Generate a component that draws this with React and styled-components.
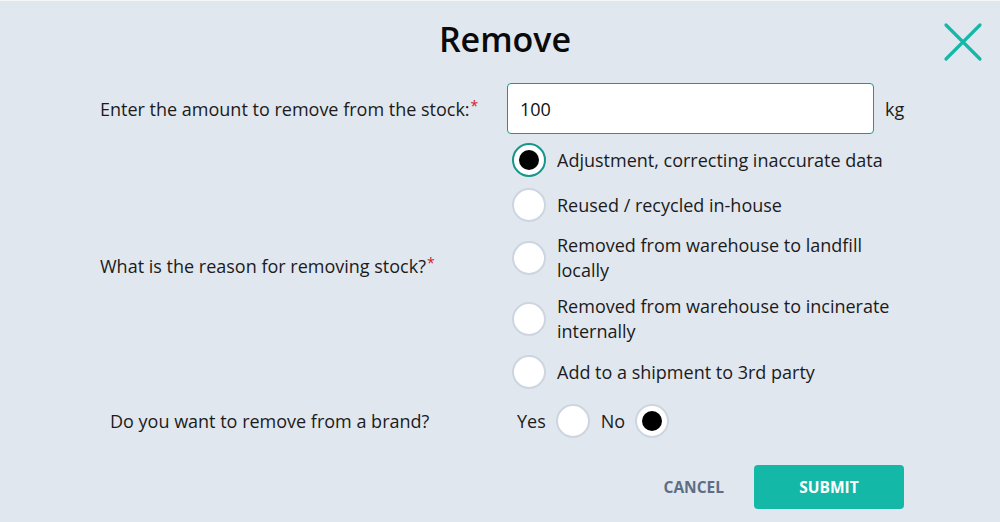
import React from 'react';
import styled, { createGlobalStyle } from 'styled-components';

const GlobalStyle = createGlobalStyle`
  html, body {
    margin: 0;
    padding: 0;
    background: #e1e7ef;
    font-family: "Open Sans", "Noto Sans", sans-serif;
    color: #1b1b1b;
  }
`;

const Modal = styled.div`
  position: relative;
  width: 1000px;
  height: 522px;
  box-sizing: border-box;
  background: #e1e7ef;
  border-top: 1px solid #f4f6f9;
  padding: 16px 96px 0 100px;
`;

const Title = styled.h1`
  margin: 0;
  text-align: center;
  font-family: "Open Sans", sans-serif;
  font-weight: 600;
  font-size: 34px;
  line-height: 44px;
  color: #0a0a0a;
  padding-left: 6px;
`;

const CloseButton = styled.button`
  position: absolute;
  top: 21px;
  right: 17px;
  width: 40px;
  height: 40px;
  padding: 0;
  border: none;
  background: none;
  cursor: pointer;
`;

const Form = styled.div`
  display: grid;
  grid-template-columns: 407px 1fr;
  align-items: center;
  row-gap: 9px;
  margin-top: 22px;
`;

const Label = styled.div`
  font-size: 18px;
  line-height: 24px;
  padding-left: ${(p) => p.indent || 0}px;
  margin-top: ${(p) => p.offset || 0}px;
`;

const Required = styled.span`
  color: #d0202a;
  font-size: 14px;
  vertical-align: top;
  line-height: 18px;
  margin-left: 1px;
`;

const InputRow = styled.div`
  display: flex;
  align-items: center;
  gap: 11px;
`;

const Input = styled.input`
  width: 367px;
  height: 51px;
  box-sizing: border-box;
  border: 1px solid #1a9a8a;
  border-radius: 4px;
  padding: 0 12px;
  font-family: "Open Sans", sans-serif;
  font-size: 18px;
  color: #111;
  background: #fff;
  outline: none;
`;

const Unit = styled.span`
  font-size: 18px;
`;

const RadioList = styled.div`
  display: flex;
  flex-direction: column;
  gap: 11px;
  padding-left: 5px;
`;

const Option = styled.label`
  display: flex;
  align-items: center;
  gap: 11px;
  min-height: 34px;
  font-size: 18px;
  line-height: 25px;
  max-width: 390px;
  cursor: pointer;
`;

const Circle = styled.span`
  flex: none;
  width: 34px;
  height: 34px;
  box-sizing: border-box;
  border-radius: 50%;
  border: 2px solid ${(p) => (p.focused ? '#16968a' : '#cdd5e0')};
  background: #fff;
  display: flex;
  align-items: center;
  justify-content: center;
  &::after {
    content: '';
    width: 20px;
    height: 20px;
    border-radius: 50%;
    background: #000;
    display: ${(p) => (p.checked ? 'block' : 'none')};
  }
`;

const Inline = styled.div`
  display: flex;
  align-items: center;
  gap: 10px;
  padding-left: 10px;
  margin-top: 6px;
  font-size: 18px;
`;

const InlineOption = styled.label`
  display: flex;
  align-items: center;
  gap: 10px;
  margin-right: 1px;
`;

const Footer = styled.div`
  display: flex;
  justify-content: flex-end;
  align-items: center;
  gap: 30px;
  margin-top: 27px;
`;

const CancelButton = styled.button`
  border: none;
  background: none;
  padding: 0;
  font-family: "Open Sans", sans-serif;
  font-weight: 700;
  font-size: 15.5px;
  color: #5f6d84;
  cursor: pointer;
`;

const SubmitButton = styled.button`
  width: 150px;
  height: 44px;
  border: none;
  border-radius: 4px;
  background: #14b8a6;
  color: #fff;
  font-family: "Open Sans", sans-serif;
  font-weight: 700;
  font-size: 15.5px;
  cursor: pointer;
`;

const reasons = [
  'Adjustment, correcting inaccurate data',
  'Reused / recycled in-house',
  'Removed from warehouse to landfill locally',
  'Removed from warehouse to incinerate internally',
  'Add to a shipment to 3rd party',
];

const App = () => {
  return (
    <Modal>
      <GlobalStyle />
      <Title>Remove</Title>
      <CloseButton aria-label="Close">
        <svg width="40" height="40" viewBox="0 0 40 40">
          <path d="M3 3 L37 37 M37 3 L3 37" stroke="#14b8a6" strokeWidth="3.2" strokeLinecap="round" />
        </svg>
      </CloseButton>
      <Form>
        <Label>
          Enter the amount to remove from the stock:<Required>*</Required>
        </Label>
        <InputRow>
          <Input defaultValue="100" />
          <Unit>kg</Unit>
        </InputRow>

        <Label>
          What is the reason for removing stock?<Required>*</Required>
        </Label>
        <RadioList>
          {reasons.map((r, i) => (
            <Option key={r}>
              <Circle checked={i === 0} focused={i === 0} />
              <span>{r}</span>
            </Option>
          ))}
        </RadioList>

        <Label indent={10} offset={6}>Do you want to remove from a brand?</Label>
        <Inline>
          <InlineOption>
            Yes <Circle />
          </InlineOption>
          <InlineOption>
            No <Circle checked />
          </InlineOption>
        </Inline>
      </Form>
      <Footer>
        <CancelButton>CANCEL</CancelButton>
        <SubmitButton>SUBMIT</SubmitButton>
      </Footer>
    </Modal>
  );
};

export default App;
